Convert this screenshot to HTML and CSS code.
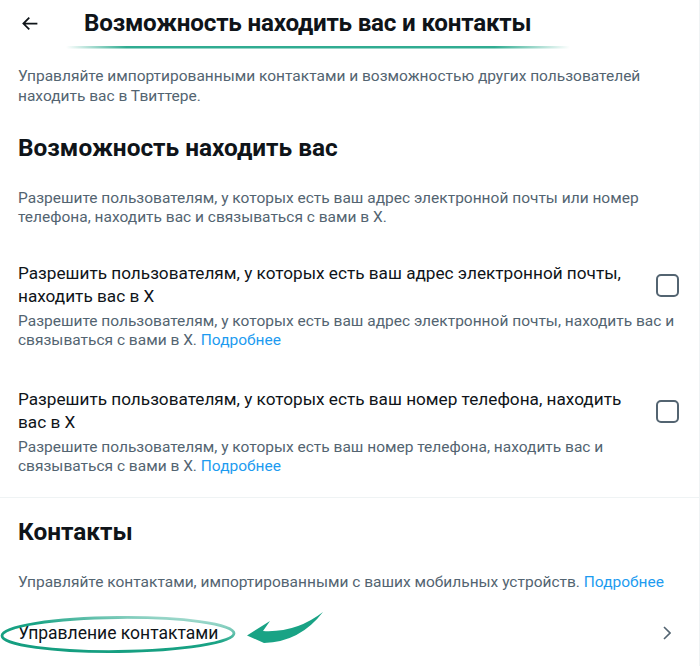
FILE: index.html
```html
<!DOCTYPE html>
<html lang="ru">
<head>
<meta charset="utf-8">
<link rel="stylesheet" href="styles.css">
</head>
<body>
<div class="page">
  <header class="topbar">
    <button class="back" aria-label="Назад">
      <svg viewBox="0 0 24 24" width="21" height="21"><path d="M7.414 13l5.043 5.04-1.414 1.42L3.586 12l7.457-7.46 1.414 1.42L7.414 11H21v2H7.414z"/></svg>
    </button>
    <h1 class="title">Возможность находить вас и контакты</h1>
  </header>
  <p class="intro">Управляйте импортированными контактами и возможностью других пользователей находить вас в Твиттере.</p>

  <section class="section">
    <h2 class="heading">Возможность находить вас</h2>
    <p class="desc">Разрешите пользователям, у которых есть ваш адрес электронной почты или номер телефона, находить вас и связываться с вами в X.</p>

    <div class="option">
      <div class="opt-head">
        <span class="opt-title">Разрешить пользователям, у которых есть ваш адрес электронной почты, находить вас в X</span>
        <span class="checkbox"></span>
      </div>
      <p class="opt-sub">Разрешите пользователям, у которых есть ваш адрес электронной почты, находить вас и связываться с вами в X. <a class="link" href="#">Подробнее</a></p>
    </div>

    <div class="option">
      <div class="opt-head">
        <span class="opt-title">Разрешить пользователям, у которых есть ваш номер телефона, находить вас в X</span>
        <span class="checkbox"></span>
      </div>
      <p class="opt-sub">Разрешите пользователям, у которых есть ваш номер телефона, находить вас и связываться с вами в X. <a class="link" href="#">Подробнее</a></p>
    </div>
  </section>

  <section class="section contacts">
    <h2 class="heading">Контакты</h2>
    <p class="desc">Управляйте контактами, импортированными с ваших мобильных устройств. <a class="link" href="#">Подробнее</a></p>
    <div class="row">
      <span class="row-label">Управление контактами</span>
      <svg class="chev" viewBox="0 0 8 14" width="8" height="14"><path d="M1 1l6 6-6 6" fill="none" stroke="#536471" stroke-width="1.6"/></svg>
    </div>
  </section>

  <svg class="marks" width="700" height="666" viewBox="0 0 700 666">
    <defs>
      <linearGradient id="ul" x1="0" x2="1" y1="0" y2="0">
        <stop offset="0" stop-color="#19a385" stop-opacity="0"/>
        <stop offset="0.12" stop-color="#19a385" stop-opacity="0.9"/>
        <stop offset="0.85" stop-color="#19a385" stop-opacity="0.9"/>
        <stop offset="1" stop-color="#19a385" stop-opacity="0"/>
      </linearGradient>
      <linearGradient id="el" x1="0" y1="1" x2="0.8" y2="0">
        <stop offset="0" stop-color="#139c7e"/>
        <stop offset="0.6" stop-color="#19a385"/>
        <stop offset="1" stop-color="#19a385" stop-opacity="0.35"/>
      </linearGradient>
    </defs>
    <rect x="66" y="46" width="504" height="2.6" rx="1.3" fill="url(#ul)"/>
    <ellipse cx="118" cy="634.5" rx="116" ry="17" fill="none" stroke="url(#el)" stroke-width="2.8" transform="rotate(-0.6 118 634)"/>
    <path d="M247,635.5 L270,621 L263,631 Q296,633 323,612 Q300,642 264,643 Z" fill="#19a385"/>
  </svg>
</div>
</body>
</html>
```
FILE: styles.css
```css
* { box-sizing: border-box; }
html, body { margin: 0; padding: 0; background: #fff; }
body { font-family: Roboto, "Liberation Sans", sans-serif; color: #0f1419; }
.page {
  position: relative;
  width: 700px;
  height: 666px;
  overflow: hidden;
  border-right: 1px solid #eff3f4;
}
.topbar {
  display: flex;
  align-items: center;
  height: 46px;
  padding: 0 16px;
}
.back {
  width: 26px;
  height: 26px;
  padding: 0;
  margin: 0 42px 0 0;
  border: 0;
  background: none;
  display: flex;
  align-items: center;
  justify-content: center;
}
.back svg { fill: #0f1419; }
.title {
  margin: 0;
  font-size: 24.2px;
  font-weight: 700;
  line-height: 28px;
  letter-spacing: -0.2px;
}
.intro {
  margin: 20px 0 0;
  padding: 0 18px;
  font-size: 15.5px;
  line-height: 20px;
  color: #536471;
}
.section { padding: 0 18px; }
.heading {
  margin: 0;
  font-size: 24.4px;
  font-weight: 700;
  line-height: 28px;
}
.section:first-of-type .heading { margin-top: 28px; }
.desc {
  margin: 27px 0 0;
  font-size: 15.5px;
  line-height: 19px;
  color: #536471;
}
.option { margin-top: 35px; }
.option + .option { margin-top: 38px; }
.opt-head {
  display: flex;
  align-items: center;
  justify-content: space-between;
  gap: 14px;
}
.opt-title {
  flex: 1;
  font-size: 17.2px;
  line-height: 23px;
}
.checkbox {
  flex: none;
  width: 23px;
  height: 23px;
  margin-right: 2px;
  border: 2px solid #536471;
  border-radius: 5px;
}
.opt-sub {
  margin: 4px 0 0;
  font-size: 15.5px;
  line-height: 19px;
  color: #536471;
}
.link {
  display: inline-block;
  line-height: 19px;
  color: #1d9bf0;
  text-decoration: none;
}
.contacts {
  margin-top: 21px;
  border-top: 1px solid #eff3f4;
}
.contacts .heading { margin-top: 20px; }
.contacts .desc { margin-top: 27px; }
.row {
  display: flex;
  align-items: center;
  justify-content: space-between;
  margin-top: 30px;
  padding-right: 10px;
}
.row-label { font-size: 17.5px; line-height: 22px; }
.marks {
  position: absolute;
  left: 0;
  top: 0;
  pointer-events: none;
}
```
